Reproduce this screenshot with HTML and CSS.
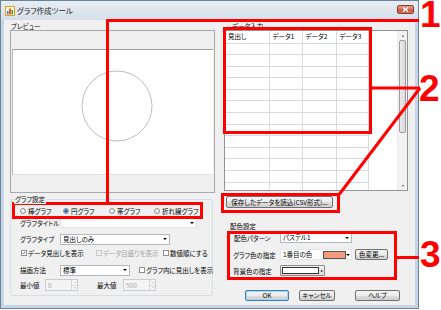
FILE: index.html
```html
<!DOCTYPE html>
<html lang="ja">
<head>
<meta charset="utf-8">
<title>グラフ作成ツール</title>
<link rel="stylesheet" href="styles.css">
</head>
<body>
<div class="window">
  <div class="titlebar">
    <svg class="app-icon" width="10" height="10" viewBox="0 0 10 10">
      <rect x="0.5" y="0.5" width="9" height="9" fill="#fff8d8" stroke="#d9a21c"/>
      <rect x="2" y="5" width="1.6" height="3.5" fill="#3a78d0"/>
      <rect x="4.2" y="2.5" width="1.6" height="6" fill="#e03a2a"/>
      <rect x="6.4" y="4" width="1.6" height="4.5" fill="#3aa83a"/>
    </svg>
    <span class="title">グラフ作成ツール</span>
    <div class="close">
      <svg width="7" height="5" viewBox="0 0 7 5"><path d="M1 0.5 L6 4.5 M6 0.5 L1 4.5" stroke="#fff" stroke-width="1.3"/></svg>
    </div>
  </div>
  <div class="client">
    <div class="col-left">
      <div class="lbl lbl-preview">プレビュー</div>
      <div class="preview">
        <div class="canvas">
          <svg width="202" height="125" viewBox="0 0 202 125"><circle cx="104" cy="56" r="35" fill="none" stroke="#bdbdbd" stroke-width="1"/></svg>
        </div>
      </div>
      <div class="legend"><span>グラフ設定</span></div>
      <div class="group graph-group">
        <div class="row radios">
          <label class="radio w43"><i class="rb"></i>棒グラフ</label>
          <label class="radio w46"><i class="rb on"></i>円グラフ</label>
          <label class="radio w45"><i class="rb"></i>帯グラフ</label>
          <label class="radio"><i class="rb"></i>折れ線グラフ</label>
        </div>
        <div class="row row-title">
          <span class="rlabel">グラフタイトル</span>
          <div class="edit-combo w137"><span class="arrow"></span></div>
        </div>
        <div class="row row-type">
          <span class="rlabel">グラフタイプ</span>
          <div class="combo w110"><span class="val">見出しのみ</span><span class="arrow"></span></div>
        </div>
        <div class="row row-check">
          <label class="check w75"><i class="cb"><svg viewBox="0 0 6 6"><path d="M1.2 3 L2.5 4.4 L4.9 1.3" fill="none" stroke="#22407a" stroke-width="1.1"/></svg></i>データ見出しを表示</label>
          <label class="check w67 disabled"><i class="cb"><svg viewBox="0 0 6 6"><path d="M1.2 3 L2.5 4.4 L4.9 1.3" fill="none" stroke="#a8a8a8" stroke-width="1.1"/></svg></i>データ目盛りを表示</label>
          <label class="check"><i class="cb"></i>数値順にする</label>
        </div>
        <div class="row row-draw">
          <span class="rlabel">描画方法</span>
          <div class="combo w70"><span class="val">標準</span><span class="arrow"></span></div>
          <label class="check ml9"><i class="cb"></i>グラフ内に見出しを表示</label>
        </div>
        <div class="row row-range">
          <span class="rlabel w25">最小値</span>
          <div class="spin"><span class="val">0</span><span class="spin-btns"><i class="up"></i><i class="down"></i></span></div>
          <span class="rlabel w26 ml19">最大値</span>
          <div class="spin"><span class="val">500</span><span class="spin-btns"><i class="up"></i><i class="down"></i></span></div>
        </div>
      </div>
    </div>

    <div class="col-right">
      <div class="lbl lbl-data">データ入力</div>
      <div class="datagrid">
        <div class="grid-area">
          <table class="sheet">
            <thead>
              <tr><th class="c1">見出し</th><th class="c2">データ1</th><th class="c3">データ2</th><th class="c4">データ3</th></tr>
            </thead>
            <tbody>
              <tr><td></td><td></td><td></td><td></td></tr>
              <tr><td></td><td></td><td></td><td></td></tr>
              <tr><td></td><td></td><td></td><td></td></tr>
              <tr><td></td><td></td><td></td><td></td></tr>
              <tr><td></td><td></td><td></td><td></td></tr>
              <tr><td></td><td></td><td></td><td></td></tr>
              <tr><td></td><td></td><td></td><td></td></tr>
              <tr><td></td><td></td><td></td><td></td></tr>
              <tr><td></td><td></td><td></td><td></td></tr>
              <tr><td></td><td></td><td></td><td></td></tr>
              <tr><td></td><td></td><td></td><td></td></tr>
              <tr><td></td><td></td><td></td><td></td></tr>
              <tr><td></td><td></td><td></td><td></td></tr>
            </tbody>
          </table>
        </div>
        <div class="vscroll">
          <div class="sb-btn"><span class="tri-up"></span></div>
          <div class="sb-thumb"></div>
          <div class="sb-track"></div>
          <div class="sb-btn"><span class="tri-down"></span></div>
        </div>
      </div>
      <button class="btn btn-csv">保存したデータを読込(CSV形式)...</button>

      <div class="lbl lbl-color">配色設定</div>
      <div class="crow crow1">
        <span class="clabel">配色パターン</span>
        <div class="combo w72"><span class="val">パステル1</span><span class="arrow"></span></div>
      </div>
      <div class="crow crow2">
        <span class="clabel">グラフ色の指定</span>
        <div class="color-combo"><span class="val">1番目の色</span><span class="swatch"></span><span class="arrow"></span></div>
        <button class="btn btn-change">色変更...</button>
      </div>
      <div class="crow crow3">
        <span class="clabel">背景色の指定</span>
        <div class="color-btn"><span class="color-face"></span><span class="tri-right"></span></div>
      </div>

      <div class="actions">
        <button class="btn btn-ok">OK</button>
        <button class="btn btn-cancel">キャンセル</button>
        <button class="btn btn-help">ヘルプ</button>
      </div>
    </div>
  </div>
</div>

<svg class="annot" width="441" height="310" viewBox="0 0 441 310">
  <g fill="none" stroke="#ff0000" stroke-width="3">
    <rect x="13.5" y="203.5" width="188" height="14"/>
    <polyline points="107.5,203 107.5,20.5 419,20.5"/>
    <rect x="224.5" y="28.5" width="146" height="104"/>
    <line x1="372" y1="88" x2="420" y2="88"/>
    <line x1="420" y1="88" x2="338" y2="196"/>
    <rect x="222.5" y="194.5" width="116" height="17"/>
    <rect x="228.5" y="232.5" width="167" height="46"/>
    <line x1="397" y1="257.5" x2="419" y2="257.5"/>
  </g>
</svg>
<div class="num n1">1</div>
<div class="num n2">2</div>
<div class="num n3">3</div>
</body>
</html>
```

FILE: styles.css
```css
* { box-sizing: border-box; }
html, body { margin: 0; padding: 0; }
body {
  width: 441px;
  height: 310px;
  overflow: hidden;
  position: relative;
  background: #ffffff;
  font-family: "Noto Sans CJK JP", "Noto Sans", sans-serif;
  font-size: 6.5px;
  font-feature-settings: "palt";
  color: #000;
}

/* window frame */
.window {
  width: 419px;
  height: 309px;
  border: 1px solid #6e8299;
  background: #c6d5e5;
  display: flex;
  flex-direction: column;
}
.titlebar {
  height: 19px;
  display: flex;
  align-items: center;
  padding-left: 4px;
  background: linear-gradient(#e8edf3, #d6dfe9);
}
.app-icon { flex: none; }
.title {
  margin-left: 2px;
  font-size: 7.5px;
  line-height: 10px;
  color: #1b1b1b;
}
.close {
  margin-left: auto;
  margin-right: 4px;
  align-self: flex-start;
  margin-top: 4px;
  width: 17px;
  height: 9px;
  border: 1px solid #8d3a2c;
  border-radius: 2px;
  background: linear-gradient(#e6a291, #d26c56 50%, #c24e36 51%, #d57b62);
  display: flex;
  align-items: center;
  justify-content: center;
}
.close svg { display: block; }

.client {
  flex: 1;
  margin: 0 3px 3px 3px;
  background: #f0f0f0;
  display: flex;
  gap: 8px;
  padding: 2px 6px 0 6px;
}
.col-left { width: 205px; display: flex; flex-direction: column; }
.col-right { width: 185px; display: flex; flex-direction: column; }

.lbl { height: 8px; line-height: 8px; white-space: nowrap; }
.lbl-preview { padding-left: 1px; }

/* preview */
.preview {
  height: 163px;
  border: 1px solid #a8a8a8;
  background: #f0f0f0;
  padding: 18px 1px 17px 1px;
  display: flex;
}
.canvas {
  flex: 1;
  background: #fff;
  border-top: 1px solid #a0a0a0;
  border-left: 1px solid #b8b8b8;
  border-bottom: 1px solid #e2e2e2;
  overflow: hidden;
}
.canvas svg { display: block; }

/* group box */
.legend {
  height: 8px;
  line-height: 8px;
  margin-top: 2px;
  padding-left: 4px;
  position: relative;
  z-index: 1;
}
.legend span { background: #f0f0f0; padding: 0 1px; }
.group {
  border: 1px solid #d5dfe5;
  border-radius: 3px;
}
.graph-group {
  width: 203px;
  height: 97px;
  margin-top: -4px;
  padding: 5px 0 0 9px;
  display: flex;
  flex-direction: column;
}
.row { display: flex; align-items: center; white-space: nowrap; }
.radios { height: 12px; }
.row-title { height: 11px; }
.row-type { height: 12px; margin-top: 5px; }
.row-check { height: 10px; margin-top: 3px; padding-left: 1px; }
.row-draw { height: 12px; margin-top: 6px; }
.row-range { height: 12px; margin-top: 3px; }

.radio, .check { display: flex; align-items: center; }
.w43 { width: 43px; }
.w46 { width: 46px; }
.w45 { width: 45px; }
.w75 { width: 75px; }
.w67 { width: 67px; }
.w25 { width: 25px; }
.w26 { width: 26px; }
.ml9 { margin-left: 9px; }
.ml19 { margin-left: 19px; }

.rb {
  width: 6px;
  height: 6px;
  border-radius: 50%;
  border: 1px solid #8d8d8d;
  background: radial-gradient(circle at 40% 40%, #ffffff, #dcdcdc);
  margin-right: 2px;
  flex: none;
}
.rb.on {
  background: radial-gradient(circle, #2a6cc0 0 1.4px, #9cc0e6 1.9px, #ffffff 2.3px);
}
.cb {
  width: 6px;
  height: 6px;
  border: 1px solid #8e8f8f;
  background: #fff;
  margin-right: 1px;
  flex: none;
  display: flex;
}
.cb svg { width: 4px; height: 4px; display: block; }
.check.disabled { color: #a3a3a3; }
.check.disabled .cb { border-color: #c6c6c6; }

.rlabel { width: 40px; flex: none; }
.rlabel.w25 { width: 25px; }
.rlabel.w26 { width: 26px; }

.arrow {
  width: 0;
  height: 0;
  border-left: 2px solid transparent;
  border-right: 2px solid transparent;
  border-top: 2px solid #000;
  margin-left: auto;
  margin-right: 2px;
  flex: none;
}
.edit-combo, .combo, .color-combo {
  height: 11px;
  background: #fff;
  border: 1px solid #b4b7bd;
  display: flex;
  align-items: center;
  padding-left: 2px;
  flex: none;
}
.edit-combo { border-color: #e0e2e6; }
.w137 { width: 137px; }
.w110 { width: 110px; }
.w70 { width: 70px; }
.w72 { width: 72px; }
.val { line-height: 9px; }

.spin {
  width: 33px;
  height: 12px;
  border: 1px solid #c9cbce;
  background: #f4f4f4;
  display: flex;
  align-items: center;
  padding-left: 2px;
  color: #a8a8a8;
  flex: none;
}
.spin-btns {
  margin-left: auto;
  width: 6px;
  height: 10px;
  display: flex;
  flex-direction: column;
  border-left: 1px solid #d6d6d6;
}
.spin-btns i {
  flex: 1;
  display: flex;
  align-items: center;
  justify-content: center;
}
.spin-btns i::before {
  content: "";
  border-left: 1.5px solid transparent;
  border-right: 1.5px solid transparent;
}
.spin-btns .up::before { border-bottom: 1.5px solid #b8b8b8; }
.spin-btns .down::before { border-top: 1.5px solid #b8b8b8; }
.spin-btns .up { border-bottom: 1px solid #dedede; }

/* data grid */
.lbl-data { padding-left: 9px; }
.datagrid {
  margin-left: 1px;
  width: 184px;
  height: 161px;
  border: 1px solid #8f9399;
  background: #fff;
  display: flex;
}
.grid-area { flex: 1; overflow: hidden; }
.sheet {
  border-collapse: collapse;
  table-layout: fixed;
}
.sheet th, .sheet td {
  padding: 0 0 0 3px;
  border-right: 1px solid #dadada;
  border-bottom: 1px solid #dadada;
  font-weight: normal;
  text-align: left;
}
.sheet th { height: 12px; line-height: 11px; }
.sheet td { height: 11.6px; }
.c1 { width: 44px; }
.c2 { width: 33px; }
.c3 { width: 34px; }
.c4 { width: 32px; }

.vscroll {
  width: 10px;
  background: #f2f2f2;
  border-left: 1px solid #ececec;
  display: flex;
  flex-direction: column;
}
.sb-btn {
  height: 9px;
  display: flex;
  align-items: center;
  justify-content: center;
}
.tri-up, .tri-down {
  width: 0;
  height: 0;
  border-left: 1.5px solid transparent;
  border-right: 1.5px solid transparent;
}
.tri-up { border-bottom: 2px solid #505050; }
.tri-down { border-top: 2px solid #505050; }
.sb-thumb {
  height: 93px;
  margin: 0 1px;
  border: 1px solid #9c9c9c;
  border-radius: 2px;
  background: linear-gradient(90deg, #eaeaea, #dadada);
}
.sb-track { flex: 1; }

/* buttons */
.btn {
  font: inherit;
  font-feature-settings: "palt";
  color: #000;
  margin: 0;
  padding: 0;
  border: 1px solid #707070;
  border-radius: 2px;
  background: linear-gradient(#f4f4f4, #ebebeb 50%, #dddddd 51%, #cfcfcf);
  display: flex;
  align-items: center;
  justify-content: center;
  line-height: 9px;
  white-space: nowrap;
}
.btn-csv {
  margin-top: 5px;
  margin-left: 3px;
  width: 107px;
  height: 12px;
}

.lbl-color { margin-top: 14px; padding-left: 7px; }
.crow { display: flex; align-items: center; padding-left: 11px; white-space: nowrap; }
.crow1 { height: 11px; margin-top: 2px; }
.crow2 { height: 11px; margin-top: 6px; padding-left: 10px; }
.crow3 { height: 11px; margin-top: 5px; padding-left: 10px; }
.clabel { width: 46px; flex: none; }
.crow2 .clabel, .crow3 .clabel { width: 47px; }

.color-combo {
  width: 72px;
  border-color: #e4e6ea;
}
.swatch {
  width: 23px;
  height: 8px;
  margin-left: 11px;
  background: #f29a7c;
  border: 1px solid #555;
  flex: none;
}
.btn-change { margin-left: 3px; width: 33px; height: 11px; }
.color-btn {
  width: 45px;
  height: 11px;
  border: 1px solid #8a8a8a;
  border-radius: 1px;
  background: linear-gradient(#f4f4f4, #dcdcdc);
  display: flex;
  align-items: center;
  padding: 1px;
}
.color-face {
  width: 37px;
  height: 7px;
  background: #fff;
  border: 1px solid #333;
}
.tri-right {
  width: 0;
  height: 0;
  border-top: 1.5px solid transparent;
  border-bottom: 1.5px solid transparent;
  border-left: 2px solid #000;
  margin-left: 2px;
}

.actions { display: flex; margin-top: 14px; padding-left: 22px; }
.btn-ok { width: 44px; height: 11px; border-color: #3c7fb1; box-shadow: inset 0 0 0 1px #a6d4f3; }
.btn-cancel { width: 36px; height: 11px; margin-left: 10px; }
.btn-help { width: 45px; height: 11px; margin-left: 20px; }

/* annotation overlay */
.annot { position: absolute; left: 0; top: 0; pointer-events: none; }
.num {
  position: absolute;
  font-family: "Liberation Sans", Arial, sans-serif;
  font-weight: bold;
  font-size: 37px;
  line-height: 30px;
  color: #ff0000;
}
.n1 { left: 420px; top: 0; }
.n2 { left: 419px; top: 74px; }
.n3 { left: 420px; top: 240px; }
```
